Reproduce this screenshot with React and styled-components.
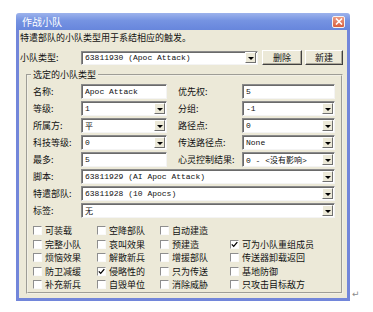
import styled, { createGlobalStyle } from "styled-components";

const GlobalStyle = createGlobalStyle`
  body {
    margin: 0;
    background: #fff;
  }
`;

const cjk = `"Noto Sans CJK SC", "Noto Sans", sans-serif`;
const mono = `"Liberation Mono", "Noto Sans CJK SC", monospace`;

const Page = styled.div`
  display: flex;
  align-items: flex-end;
  padding: 13px 0 0 16px;
  font-family: ${cjk};
  color: #111;
`;

const Window = styled.div`
  width: 334px;
  display: flex;
  flex-direction: column;
`;

const TitleBar = styled.div`
  height: 17px;
  display: flex;
  align-items: center;
  justify-content: space-between;
  padding: 0 5px 0 6px;
  background: linear-gradient(180deg, #9db3ec 0%, #7593e2 45%, #6786dc 100%);
  border-radius: 3px 3px 0 0;
  color: #fff;
  font-size: 10px;
  line-height: 17px;
`;

const CloseButton = styled.div`
  width: 13px;
  height: 12px;
  box-sizing: border-box;
  border: 1px solid #f4f4f4;
  border-radius: 2px;
  background: linear-gradient(180deg, #ec9a82, #d9603f);
  display: flex;
  align-items: center;
  justify-content: center;
`;

const Frame = styled.div`
  height: 271px;
  box-sizing: border-box;
  border: 3px solid #7286da;
  border-top: none;
  background: #ece9d8;
  display: flex;
  flex-direction: column;
`;

const Description = styled.div`
  margin: 2px 0 0 1px;
  font-size: 9px;
  line-height: 12px;
`;

const TypeRow = styled.div`
  margin-top: 6px;
  height: 15px;
  display: flex;
  align-items: center;
  padding-left: 1px;
`;

const TypeLabel = styled.span`
  width: 61px;
  font-size: 9px;
`;

const Field = styled.div`
  width: ${(p) => p.$w || "auto"};
  grid-column: ${(p) => p.$span || "auto"};
  height: ${(p) => p.$h || "15px"};
  box-sizing: border-box;
  border: 1px solid;
  border-color: #8a8a8a #f4f4f4 #f4f4f4 #8a8a8a;
  box-shadow: inset 1px 1px #6a6a6a;
  background: #fff;
  display: flex;
  align-items: center;
  padding-left: 3px;
  font: 8px ${mono};
  white-space: nowrap;
  overflow: hidden;
`;

const DropButton = styled.span`
  margin-left: auto;
  margin-right: 1px;
  width: 11px;
  height: 11px;
  flex: none;
  box-sizing: border-box;
  border: 1px solid;
  border-color: #fff #707070 #707070 #fff;
  background: #ece9d8;
  display: flex;
  align-items: center;
  justify-content: center;

  &::after {
    content: "";
    border-left: 3px solid transparent;
    border-right: 3px solid transparent;
    border-top: 3px solid #000;
    margin-top: 1px;
  }
`;

const Button = styled.button`
  width: ${(p) => p.$w};
  margin-left: ${(p) => p.$gap};
  height: 15px;
  padding: 0;
  box-sizing: border-box;
  border: 1px solid;
  border-color: #fff #404040 #404040 #fff;
  box-shadow: inset -1px -1px #aca899;
  background: #ece9d8;
  font: 9px ${cjk};
  color: #111;
`;

const GroupBox = styled.fieldset`
  margin: 4px 4px 5px 7px;
  padding: 3px 6px 0 5px;
  border: 2px groove #f2f0e6;
  min-width: 0;
  flex: 1;
`;

const Legend = styled.legend`
  margin-left: -2px;
  padding: 0 2px;
  font-size: 9px;
  line-height: 12px;
`;

const FormGrid = styled.div`
  display: grid;
  grid-template-columns: 48px 86px 11px 64px 93px;
  grid-auto-rows: 15px;
  row-gap: 2px;
  align-items: center;
`;

const Label = styled.span`
  grid-column: ${(p) => p.$col || "auto"};
  font-size: 9px;
  white-space: nowrap;
`;

const CheckGrid = styled.div`
  margin-top: 6px;
  display: grid;
  grid-template-columns: 64px 63px 70px 1fr;
  grid-auto-rows: 13.5px;
  align-items: center;
`;

const CheckItem = styled.label`
  grid-column: ${(p) => p.$col || "auto"};
  display: flex;
  align-items: center;
  gap: 3px;
  font-size: 9px;
  white-space: nowrap;
`;

const Box = styled.span`
  width: 9px;
  height: 9px;
  box-sizing: border-box;
  border: 1px solid;
  border-color: #8e8e8e #fafafa #fafafa #8e8e8e;
  background: #fff;
  display: flex;
  align-items: center;
  justify-content: center;
`;

const ReturnMark = styled.span`
  margin: 0 0 2px 2px;
  font: 9px "DejaVu Sans", sans-serif;
  color: #8a8a8a;
`;

const Check = ({ label, checked, col }) => (
  <CheckItem $col={col}>
    <Box>
      {checked && (
        <svg width="7" height="7" viewBox="0 0 7 7">
          <polyline points="0.8,3.4 2.7,5.4 6.3,1.2" fill="none" stroke="#000" strokeWidth="1.3" />
        </svg>
      )}
    </Box>
    {label}
  </CheckItem>
);

const Combo = ({ value, span, w }) => (
  <Field $span={span} $w={w}>
    {value}
    <DropButton />
  </Field>
);

const checks = [
  ["可装载", false, 1], ["空降部队", false], ["自动建造", false],
  ["完整小队", false, 1], ["哀叫效果", false], ["预建造", false], ["可为小队重组成员", true],
  ["烦恼效果", false, 1], ["解散新兵", false], ["增援部队", false], ["传送器卸载返回", false],
  ["防卫减缓", false, 1], ["侵略性的", true], ["只为传送", false], ["基地防御", false],
  ["补充新兵", false, 1], ["自毁单位", false], ["消除威胁", false], ["只攻击目标敌方", false],
];

const App = () => {
  return (
    <Page>
      <GlobalStyle />
      <Window>
        <TitleBar>
          作战小队
          <CloseButton>
            <svg width="8" height="7" viewBox="0 0 8 7">
              <path d="M1 0.5 L7 6.5 M7 0.5 L1 6.5" stroke="#fff" strokeWidth="1.6" />
            </svg>
          </CloseButton>
        </TitleBar>
        <Frame>
          <Description>特遣部队的小队类型用于系结相应的触发。</Description>
          <TypeRow>
            <TypeLabel>小队类型:</TypeLabel>
            <Field $w="177px" $h="14px">
              63811930 (Apoc Attack)
              <DropButton />
            </Field>
            <Button $w="40px" $gap="4px">删除</Button>
            <Button $w="38px" $gap="3px">新建</Button>
          </TypeRow>
          <GroupBox>
            <Legend>选定的小队类型</Legend>
            <FormGrid>
              <Label>名称:</Label>
              <Field>Apoc Attack</Field>
              <Label $col="4">优先权:</Label>
              <Field>5</Field>

              <Label>等级:</Label>
              <Combo value="1" />
              <Label $col="4">分组:</Label>
              <Combo value="-1" />

              <Label>所属方:</Label>
              <Combo value="平" />
              <Label $col="4">路径点:</Label>
              <Combo value="0" />

              <Label>科技等级:</Label>
              <Combo value="0" />
              <Label $col="4">传送路径点:</Label>
              <Combo value="None" />

              <Label>最多:</Label>
              <Field>5</Field>
              <Label $col="4">心灵控制结果:</Label>
              <Combo value="0 - <没有影响>" />

              <Label>脚本:</Label>
              <Combo value="63811929 (AI Apoc Attack)" span="2 / 6" />

              <Label>特遣部队:</Label>
              <Combo value="63811928 (10 Apocs)" span="2 / 6" />

              <Label>标签:</Label>
              <Combo value="无" span="2 / 6" />
            </FormGrid>
            <CheckGrid>
              {checks.map(([label, checked, col]) => (
                <Check key={label} label={label} checked={checked} col={col} />
              ))}
            </CheckGrid>
          </GroupBox>
        </Frame>
      </Window>
      <ReturnMark>↵</ReturnMark>
    </Page>
  );
};

export default App;
